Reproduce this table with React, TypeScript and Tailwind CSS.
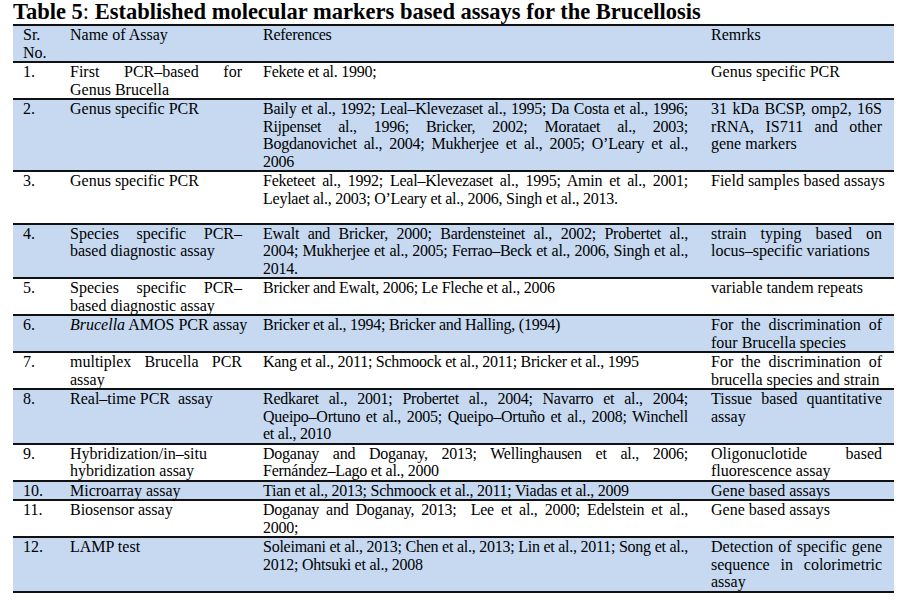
import type { ReactNode } from 'react';

// Each cell is a list of printed lines; every line but the last is justified.
type Row = {
  no: ReactNode[];
  name: ReactNode[];
  refs: ReactNode[];
  remarks: ReactNode[];
  minLines?: number;
  shaded: boolean;
};

const ROWS: Row[] = [
  {
    no: ['Sr.', 'No.'],
    name: ['Name of Assay'],
    refs: ['References'],
    remarks: ['Remrks'],
    shaded: true
  },
  {
    no: ['1.'],
    name: ['First PCR–based for', 'Genus Brucella'],
    refs: ['Fekete et al. 1990;'],
    remarks: ['Genus specific PCR'],
    shaded: false
  },
  {
    no: ['2.'],
    name: ['Genus specific PCR'],
    refs: [
      'Baily et al., 1992; Leal–Klevezaset al., 1995; Da Costa et al., 1996;',
      'Rijpenset al., 1996; Bricker, 2002; Morataet al., 2003;',
      'Bogdanovichet al., 2004; Mukherjee et al., 2005; O’Leary et al.,',
      '2006'
    ],
    remarks: ['31 kDa BCSP, omp2, 16S', 'rRNA, IS711 and other', 'gene markers'],
    shaded: true
  },
  {
    no: ['3.'],
    name: ['Genus specific PCR'],
    refs: [
      'Feketeet al., 1992; Leal–Klevezaset al., 1995; Amin et al., 2001;',
      'Leylaet al., 2003; O’Leary et al., 2006, Singh et al., 2013.'
    ],
    remarks: ['Field samples based assays'],
    minLines: 3,
    shaded: false
  },
  {
    no: ['4.'],
    name: ['Species specific PCR–', 'based diagnostic assay'],
    refs: [
      'Ewalt and Bricker, 2000; Bardensteinet al., 2002; Probertet al.,',
      '2004; Mukherjee et al., 2005; Ferrao–Beck et al., 2006, Singh et al.,',
      '2014.'
    ],
    remarks: ['strain typing based on', 'locus–specific variations'],
    shaded: true
  },
  {
    no: ['5.'],
    name: ['Species specific PCR–', 'based diagnostic assay'],
    refs: ['Bricker and Ewalt, 2006; Le Fleche et al., 2006'],
    remarks: ['variable tandem repeats'],
    shaded: false
  },
  {
    no: ['6.'],
    name: [<><i>Brucella</i> AMOS PCR assay</>],
    refs: ['Bricker et al., 1994; Bricker and Halling, (1994)'],
    remarks: ['For the discrimination of', 'four Brucella species'],
    shaded: true
  },
  {
    no: ['7.'],
    name: ['multiplex Brucella PCR', 'assay'],
    refs: ['Kang et al., 2011; Schmoock et al., 2011; Bricker et al., 1995'],
    remarks: ['For the discrimination of', 'brucella species and strain'],
    shaded: false
  },
  {
    no: ['8.'],
    name: ['Real–time PCR  assay'],
    refs: [
      'Redkaret al., 2001; Probertet al., 2004; Navarro et al., 2004;',
      'Queipo–Ortuno et al., 2005; Queipo–Ortuño et al., 2008; Winchell',
      'et al., 2010'
    ],
    remarks: ['Tissue based quantitative', 'assay'],
    shaded: true
  },
  {
    no: ['9.'],
    name: ['Hybridization/in–situ', 'hybridization assay'],
    refs: [
      'Doganay and Doganay, 2013; Wellinghausen et al., 2006;',
      'Fernández–Lago et al., 2000'
    ],
    remarks: ['Oligonuclotide based', 'fluorescence assay'],
    shaded: false
  },
  {
    no: ['10.'],
    name: ['Microarray assay'],
    refs: ['Tian et al., 2013; Schmoock et al., 2011; Viadas et al., 2009'],
    remarks: ['Gene based assays'],
    shaded: true
  },
  {
    no: ['11.'],
    name: ['Biosensor assay'],
    refs: ['Doganay and Doganay, 2013;  Lee et al., 2000; Edelstein et al.,', '2000;'],
    remarks: ['Gene based assays'],
    shaded: false
  },
  {
    no: ['12.'],
    name: ['LAMP test'],
    refs: [
      'Soleimani et al., 2013; Chen et al., 2013; Lin et al., 2011; Song et al.,',
      '2012; Ohtsuki et al., 2008'
    ],
    remarks: ['Detection of specific gene', 'sequence in colorimetric', 'assay'],
    shaded: true
  }
];

function Lines({ lines }: { lines: ReactNode[] }) {
  return (
    <>
      {lines.map((line, i) => (
        <div
          key={i}
          className={`whitespace-pre ${
            i < lines.length - 1 ? 'text-justify [text-align-last:justify]' : ''
          }`}
        >
          {line}
        </div>
      ))}
    </>
  );
}

export default function App() {
  return (
    <div className="w-[904px] h-[601px] bg-white text-black font-['Liberation_Serif','Times_New_Roman',serif] overflow-hidden">
      <h1 className="pl-[13px] h-[24px] text-[22.5px] leading-[24px] font-bold whitespace-nowrap">
        Table 5<span className="font-normal">:</span> Established molecular markers based assays for the Brucellosis
      </h1>

      <div className="ml-[13px] w-[881px] border-t-2 border-[#111] text-[16px] leading-[17.5px]">
        {ROWS.map((row, i) => (
          <div
            key={i}
            className={`grid grid-cols-[46px_194px_447px_194px] border-b-2 border-[#111] ${
              row.shaded ? 'bg-[#c6d9f1]' : 'bg-white'
            }`}
            style={row.minLines ? { minHeight: row.minLines * 17.5 } : undefined}
          >
            <div className="pl-[10px]">
              <Lines lines={row.no} />
            </div>
            <div className="pl-[11px] pr-[11px]">
              <Lines lines={row.name} />
            </div>
            <div className="pl-[10px] pr-[12px] tracking-[-0.25px]">
              <Lines lines={row.refs} />
            </div>
            <div className="pl-[11px] pr-[12px]">
              <Lines lines={row.remarks} />
            </div>
          </div>
        ))}
      </div>
    </div>
  );
}
